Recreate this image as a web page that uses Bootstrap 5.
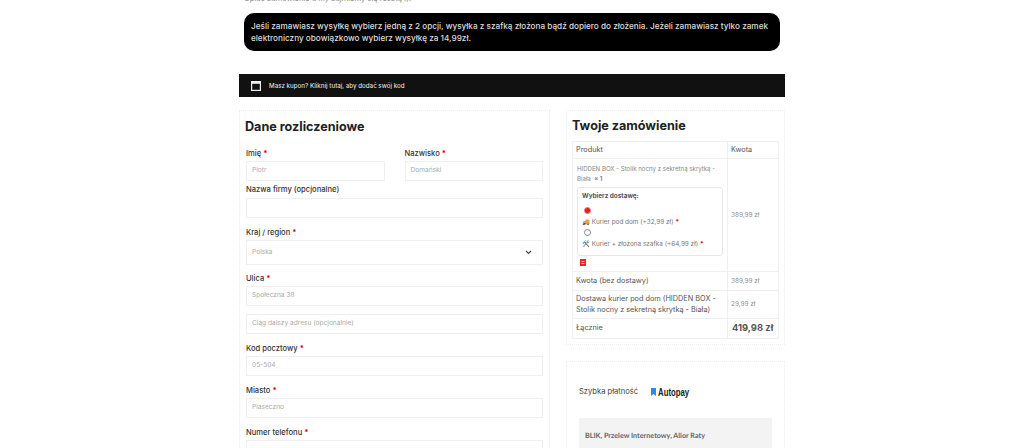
<!DOCTYPE html>
<html lang="pl"><head><meta charset="utf-8"><title>Zamówienie</title>
<link href="https://cdn.jsdelivr.net/npm/bootstrap@5.3.0/dist/css/bootstrap.min.css" rel="stylesheet">
<style>
html,body{height:448px;overflow:hidden;background:#fff}
body{font-family:Inter,"Noto Sans",sans-serif;color:#444;font-size:7.5px}
.pagewrap{width:546px;margin-left:239px}
.topnote{height:8px;line-height:8px;margin-top:-5px;padding-left:5px;font-size:7.6px;color:#888;white-space:nowrap}
.infobox{margin:10px 5px 0 5px;height:38px;background:#000;color:#ddd;border-radius:10px;padding:7px 7px;font-size:8.2px;line-height:12px;font-weight:500}
.couponbar{margin-top:23px;height:23px;background:#111;color:#ddd;font-size:6.2px;font-weight:500;padding-left:12px;gap:8px}
.colsgap{margin-top:13px;gap:16px}
.panel{border:1px dotted #eee}
.leftpanel{width:312px;height:400px;padding:0 6px}
.rightcol{width:219px;flex:none}
.paneltitle{font-size:12.6px;font-weight:700;color:#222;line-height:16px;margin:0}
.leftpanel .paneltitle{margin:8px 0 0 -1px}
.fieldlabel{display:block;font-size:7.6px;line-height:10px;color:#333;font-weight:500;margin:0 0 2px}
.req{color:#d00;font-weight:700}
.fieldinput{height:20px;border:1px solid #f0f0f0;font-size:6.6px;color:#aaa;padding:0 5px;display:flex;align-items:center}
.fieldselect{height:25px;justify-content:space-between;padding-right:10px}
.rowtwo{gap:20px;margin-top:14px}
.rowtwo>div{flex:1}
.gapfirma{margin:4px 0 3px}.gapkraj{margin-top:10px}.gapulica{margin-top:9px}.gapciag{margin-top:8px}.gapkod{margin-top:10px}.gapmiasto{margin-top:10px}.gapnumer{margin-top:10px}
.orderpanel{height:235px;padding:7px 5px 0 5px}
.ordertable{width:207px;margin-top:7px;border-collapse:collapse;table-layout:fixed;font-size:7.3px;color:#555}
.ordertable td,.ordertable th{border:1px solid #f0f0f0;padding:2px 3px;font-weight:400;vertical-align:middle;line-height:10.5px}
.ordertable .rowhead{height:17px}
.ordertable .rowprod{height:113px}
.ordertable .rownet{height:19px}
.ordertable .rowship{height:28px}
.ordertable .rowsum{height:20px}
.colkwota{width:51px}
.ordertable .price{font-size:6.4px;color:#8a8f99}
.ordertable .cellprod{vertical-align:top;padding-top:5px}
.prodname{font-size:6.1px;color:#888;line-height:10px;padding:0 1px}
.shipbox{margin:3px 1px 0;height:69px;border:1px solid #e8e8e8;border-radius:3px;padding:4px;font-size:6.4px;color:#777}
.shiptitle{font-weight:700;color:#555;line-height:8px;margin-bottom:7px}
.radiodot{width:7px;height:7px;border-radius:50%;border:1px solid #888;margin-left:2px}
.radiodot-on{border-color:#e77;background:#d22}
.shipline{line-height:10px;height:14px;display:flex;align-items:center;gap:2px;white-space:nowrap;margin-top:1px}
.ordertable .totalval{font-size:9.4px;font-weight:700;color:#555;white-space:nowrap;padding-left:4px}
.minibadge{display:block;width:6px;height:7px;margin:3px 0 0 4px}
.paypanel{margin-top:16px;height:120px;padding:18px 12px 0 12px}
.paylabel{font-size:7.6px;color:#444;gap:13px;height:24px}
.autopay{font-size:10px;font-weight:700;color:#222;font-family:"Liberation Sans",sans-serif;display:flex;align-items:center;gap:2px}
.autoword{display:inline-block;width:31px;transform:scaleX(.78);transform-origin:left center}
.paybox{margin-top:14px;background:#f3f3f3;height:60px;padding:13px 6px;font-size:7.2px;font-family:Lato,sans-serif;font-weight:700;color:#666;text-rendering:geometricPrecision}
</style></head>
<body>
<div class="pagewrap">
  <div class="topnote">Opłać zamówienie a my zajmiemy się resztą :).</div>
  <div class="infobox">Jeśli zamawiasz wysyłkę wybierz jedną z 2 opcji, wysyłka z szafką złożona bądź dopiero do złożenia. Jeżeli zamawiasz tylko zamek elektroniczny obowiązkowo wybierz wysyłkę za 14,99zł.</div>
  <div class="couponbar d-flex align-items-center">
    <svg width="10" height="10" viewBox="0 0 10 10"><rect x=".6" y=".6" width="8.8" height="8.8" fill="none" stroke="#eee" stroke-width="1.2"/><rect x=".6" y=".6" width="8.8" height="2.2" fill="#eee"/></svg>
    <span>Masz kupon? Kliknij tutaj, aby dodać swój kod</span>
  </div>
  <div class="d-flex colsgap align-items-start">
    <div class="panel leftpanel">
      <h3 class="paneltitle">Dane rozliczeniowe</h3>
      <div class="d-flex rowtwo">
        <div><label class="fieldlabel">Imię <span class="req">*</span></label><div class="fieldinput">Piotr</div></div>
        <div><label class="fieldlabel">Nazwisko <span class="req">*</span></label><div class="fieldinput">Domański</div></div>
      </div>
      <label class="fieldlabel gapfirma">Nazwa firmy (opcjonalne)</label><div class="fieldinput"></div>
      <label class="fieldlabel gapkraj">Kraj / region <span class="req">*</span></label>
      <div class="fieldinput fieldselect">Polska <svg width="7" height="5" viewBox="0 0 7 5"><path d="M1 1l2.500 2.500L6 1" fill="none" stroke="#444" stroke-width="1.1"/></svg></div>
      <label class="fieldlabel gapulica">Ulica <span class="req">*</span></label><div class="fieldinput">Społeczna 38</div>
      <div class="fieldinput gapciag">Ciąg dalszy adresu (opcjonalnie)</div>
      <label class="fieldlabel gapkod">Kod pocztowy <span class="req">*</span></label><div class="fieldinput">05-504</div>
      <label class="fieldlabel gapmiasto">Miasto <span class="req">*</span></label><div class="fieldinput">Piaseczno</div>
      <label class="fieldlabel gapnumer">Numer telefonu <span class="req">*</span></label><div class="fieldinput"></div>
    </div>
    <div class="rightcol">
      <div class="panel orderpanel">
        <h3 class="paneltitle">Twoje zamówienie</h3>
        <table class="ordertable">
          <tr class="rowhead"><th>Produkt</th><th class="colkwota">Kwota</th></tr>
          <tr class="rowprod"><td class="cellprod"><div class="prodname">HIDDEN BOX - Stolik nocny z sekretną skrytką - Biała &nbsp;<b>× 1</b></div>
            <div class="shipbox"><div class="shiptitle">Wybierz dostawę:</div>
              <div class="radiodot radiodot-on"></div>
              <div class="shipline">🚚 Kurier pod dom (+32,99 zł) <span class="req">*</span></div>
              <div class="radiodot"></div>
              <div class="shipline">🛠️ Kurier + złożona szafka (+64,99 zł) <span class="req">*</span></div>
            </div>
            <svg class="minibadge" viewBox="0 0 6 7"><rect width="6" height="7" fill="#e22"/><path d="M1.500 2.500h3M1.500 4.500h3" stroke="#fff" stroke-width=".8"/></svg></td><td class="price">389,99 zł</td></tr>
          <tr class="rownet"><td>Kwota (bez dostawy)</td><td class="price">389,99 zł</td></tr>
          <tr class="rowship"><td>Dostawa kurier pod dom (HIDDEN BOX - Stolik nocny z sekretną skrytką - Biała)</td><td class="price">29,99 zł</td></tr>
          <tr class="rowsum"><td>Łącznie</td><td class="totalval">419,98 zł</td></tr>
        </table>
      </div>
      <div class="panel paypanel">
        <div class="d-flex align-items-center paylabel">Szybka płatność
          <span class="autopay"><svg width="5" height="8" viewBox="0 0 5 8"><path d="M0 0h5v8L2.500 6 0 8z" fill="#2a8be0"/></svg><span class="autoword">Autopay</span></span></div>
        <div class="paybox">BLIK, Przelew Internetowy, Alior Raty</div>
      </div>
    </div>
  </div>
</div>
</body></html>
